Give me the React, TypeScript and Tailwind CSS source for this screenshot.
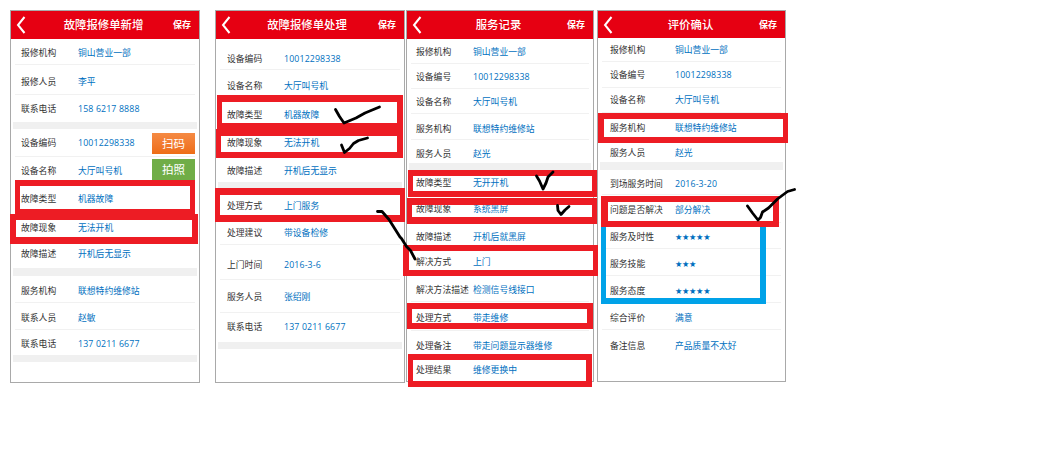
import React from "react";

type Row = { label?: string; value?: string; cls: string; band?: boolean; plain?: boolean; action?: React.ReactNode };

const band = (cls: string): Row => ({ cls, band: true });

const scan = (
  <button className="ml-auto -mt-[4px] h-[21px] w-[43px] shrink-0 bg-linear-to-b from-[#f58a43] to-[#ee6d14] text-[11.5px] leading-[19px] text-white">扫码</button>
);
const photo = (
  <button className="ml-auto -mt-[6px] h-[21px] w-[43px] shrink-0 bg-[#70ad47] text-[11.5px] leading-[19px] text-white">拍照</button>
);

const createRows: Row[] = [
  { label: "报修机构", value: "铜山营业一部", cls: "h-[26px] pt-[8px]" },
  { label: "报修人员", value: "李平", cls: "h-[30px] pt-[11px]" },
  { label: "联系电话", value: "158 6217 8888", cls: "h-[27px] pt-[8px]", plain: true },
  band("h-[7px]"),
  { label: "设备编码", value: "10012298338", cls: "h-[28px] pt-[8px]", action: scan },
  { label: "设备名称", value: "大厅叫号机", cls: "h-[28px] pt-[8px]", action: photo },
  { label: "故障类型", value: "机器故障", cls: "h-[28px] pt-[8px]" },
  { label: "故障现象", value: "无法开机", cls: "h-[28px] pt-[9px]" },
  { label: "故障描述", value: "开机后无显示", cls: "h-[27px] pt-[7px]", plain: true },
  band("h-[8px]"),
  { label: "服务机构", value: "联想特约维修站", cls: "h-[27px] pt-[9px]" },
  { label: "联系人员", value: "赵敏", cls: "h-[27px] pt-[9px]" },
  { label: "联系电话", value: "137 0211 6677", cls: "h-[25px] pt-[8px]", plain: true },
  band("h-[7px]"),
];

const handleRows: Row[] = [
  { label: "设备编码", value: "10012298338", cls: "h-[31px] pt-[13px]" },
  { label: "设备名称", value: "大厅叫号机", cls: "h-[28px] pt-[9px]" },
  { label: "故障类型", value: "机器故障", cls: "h-[30px] pt-[10px]" },
  { label: "故障现象", value: "无法开机", cls: "h-[28px] pt-[8px]" },
  { label: "故障描述", value: "开机后无显示", cls: "h-[26px] pt-[8px]", plain: true },
  band("h-[6px]"),
  { label: "处理方式", value: "上门服务", cls: "h-[31px] pt-[11px]" },
  { label: "处理建议", value: "带设备检修", cls: "h-[26px] pt-[7px]" },
  { label: "上门时间", value: "2016-3-6", cls: "h-[35px] pt-[13px]" },
  { label: "服务人员", value: "张绍刚", cls: "h-[33px] pt-[10px]" },
  { label: "联系电话", value: "137 0211 6677", cls: "h-[29px] pt-[7px]", plain: true },
  band("h-[7px]"),
];

const recordRows: Row[] = [
  { label: "报修机构", value: "铜山营业一部", cls: "h-[25px] pt-[6px]" },
  { label: "设备编号", value: "10012298338", cls: "h-[25px] pt-[6px]" },
  { label: "设备名称", value: "大厅叫号机", cls: "h-[25px] pt-[6px]" },
  { label: "服务机构", value: "联想特约维修站", cls: "h-[26px] pt-[8px]" },
  { label: "服务人员", value: "赵光", cls: "h-[23px] pt-[7px]", plain: true },
  band("h-[7px]"),
  { label: "故障类型", value: "无开开机", cls: "h-[26px] pt-[6px]" },
  { label: "故障现象", value: "系统黑屏", cls: "h-[27px] pt-[6px]" },
  { label: "故障描述", value: "开机后就黑屏", cls: "h-[26px] pt-[7px]" },
  { label: "解决方式", value: "上门", cls: "h-[26px] pt-[6px]" },
  { label: "解决方法描述", value: "检测信号线接口", cls: "h-[27px] pt-[8px]" },
  { label: "处理方式", value: "带走维修", cls: "h-[29px] pt-[9px]" },
  { label: "处理备注", value: "带走问题显示器维修", cls: "h-[26px] pt-[8px]" },
  { label: "处理结果", value: "维修更换中", cls: "h-[24px] pt-[6px]", plain: true },
];

const reviewRows: Row[] = [
  { label: "报修机构", value: "铜山营业一部", cls: "h-[24px] pt-[6px]" },
  { label: "设备编号", value: "10012298338", cls: "h-[26px] pt-[7px]" },
  { label: "设备名称", value: "大厅叫号机", cls: "h-[25px] pt-[6px]" },
  { label: "服务机构", value: "联想特约维修站", cls: "h-[27px] pt-[9px]" },
  { label: "服务人员", value: "赵光", cls: "h-[22px] pt-[7px]", plain: true },
  band("h-[8px]"),
  { label: "到场服务时间", value: "2016-3-20", cls: "h-[25px] pt-[8px]" },
  { label: "问题是否解决", value: "部分解决", cls: "h-[28px] pt-[9px]" },
  { label: "服务及时性", value: "★★★★★", cls: "h-[26px] pt-[8px]" },
  { label: "服务技能", value: "★★★", cls: "h-[27px] pt-[9px]" },
  { label: "服务态度", value: "★★★★★", cls: "h-[27px] pt-[9px]" },
  { label: "综合评价", value: "满意", cls: "h-[27px] pt-[9px]" },
  { label: "备注信息", value: "产品质量不太好", cls: "h-[40px] pt-[10px]", plain: true },
];

type PanelProps = { title: string; rows: Row[]; cls: string; header: string; indent: string; labelW: string };

function valueStyle(value = "") {
  if (value.startsWith("★")) return "font-['DejaVu_Sans'] text-[8.2px] tracking-[-0.3px]";
  if (/^\d/.test(value)) return "tracking-[0.13px]";
  return "";
}

function Panel({ title, rows, cls, header, indent, labelW }: PanelProps) {
  return (
    <section className={`shrink-0 border border-[#a9a9a9] bg-white ${cls}`}>
      <header className={`grid items-center bg-[#e60012] text-white ${header}`}>
        <svg viewBox="0 0 10 18" className="ml-[5px] h-[18px] w-[10px]" fill="none" stroke="currentColor" strokeWidth="2">
          <path d="M8.5 1 2 9l6.5 8" />
        </svg>
        <h1 className="text-center text-[11.4px] leading-4 font-medium whitespace-nowrap">{title}</h1>
        <span className="pr-2 text-right text-[9px] leading-4 font-bold">保存</span>
      </header>
      {rows.map((r, i) =>
        r.band ? (
          <div key={i} className={`mx-0.5 bg-[#f0f0f0] ${r.cls}`} />
        ) : (
          <div key={i} className={`mx-1 flex items-start border-b ${r.plain ? "border-transparent" : "border-[#f1f1f1]"} ${r.cls}`}>
            <span className={`shrink-0 whitespace-nowrap text-[#333] ${indent} ${labelW}`}>{r.label}</span>
            <span className={`whitespace-nowrap text-[#0070c0] ${valueStyle(r.value)}`}>{r.value}</span>
            {r.action}
          </div>
        )
      )}
    </section>
  );
}

const marks = [
  "left-[15px] top-[180px] h-[34px] w-[180px] border-x-[5px] border-t-[6px] border-b-[5px] border-[#ed1c24]",
  "left-[10px] top-[214px] h-[30px] w-[188px] border-x-[6px] border-t-[6px] border-b-[7px] border-[#ed1c24]",
  "left-[217px] top-[95px] h-[35px] w-[186px] border-l-[5px] border-r-[6px] border-t-[7px] border-b-[7px] border-[#ed1c24]",
  "left-[216px] top-[129px] h-[29px] w-[187px] border-l-[5px] border-r-[6px] border-t-[7px] border-b-[6px] border-[#ed1c24]",
  "left-[215px] top-[188px] h-[34px] w-[190px] border-x-[5px] border-t-[7px] border-b-[7px] border-[#ed1c24]",
  "left-[408px] top-[170px] h-[27px] w-[189px] border-x-[5px] border-y-[6px] border-[#ed1c24]",
  "left-[407px] top-[198px] h-[26px] w-[190px] border-x-[5px] border-y-[7px] border-[#ed1c24]",
  "left-[403px] top-[245px] h-[31px] w-[195px] border-l-[6px] border-r-[5px] border-y-[6px] border-[#ed1c24]",
  "left-[407px] top-[303px] h-[26px] w-[186px] border-l-[5px] border-r-[6px] border-y-[6px] border-[#ed1c24]",
  "left-[408px] top-[354px] h-[33px] w-[184px] border-l-[5px] border-r-[6px] border-y-[6px] border-[#ed1c24]",
  "left-[601px] top-[221px] h-[83px] w-[165px] border-l-[5px] border-r-[6px] border-y-[6px] border-[#00a2e8]",
  "left-[598px] top-[113px] h-[30px] w-[190px] border-l-[6px] border-r-[5px] border-y-[6px] border-[#ed1c24]",
  "left-[601px] top-[196px] h-[31px] w-[178px] border-l-[7px] border-r-[6px] border-y-[6px] border-[#ed1c24]",
];

export default function App() {
  return (
    <main className="relative flex h-[466px] w-[1052px] items-start overflow-hidden bg-white pt-[10px] pl-[10px] font-['Open_Sans','Noto_Sans_CJK_SC',sans-serif] text-[8.8px] leading-[12px]">
      <Panel title="故障报修单新增" rows={createRows} cls="h-[373px] w-[190px]" header="h-[28px] grid-cols-[38px_1fr_41px]" indent="pl-[6px]" labelW="w-[63px]" />
      <Panel title="故障报修单处理" rows={handleRows} cls="ml-[15px] h-[373px] w-[190px] leading-[14px]" header="h-[28px] grid-cols-[36px_1fr_42px]" indent="pl-[7px]" labelW="w-[64px]" />
      <Panel title="服务记录" rows={recordRows} cls="ml-[1px] h-[372px] w-[188px] leading-[14px]" header="h-[28px] grid-cols-[38px_1fr_41px]" indent="pl-[5px]" labelW="w-[62px]" />
      <Panel title="评价确认" rows={reviewRows} cls="ml-[3px] h-[372px] w-[189px]" header="h-[27px] grid-cols-[39px_1fr_41px]" indent="pl-[8px]" labelW="w-[73px]" />
      {marks.map((m) => (
        <div key={m} className={`pointer-events-none absolute ${m}`} />
      ))}
      <svg className="pointer-events-none absolute inset-0" width="1052" height="466" fill="none" stroke="#000" strokeWidth="2.8" strokeLinecap="round" strokeLinejoin="round">
        <path d="M335.5 109.5l4 7 4.500 6.500 12-5 9-5 6-2.500 8.500-3.500" />
        <path d="M341.500 145l3 7.500 5-4 4-5 5-3 9-2.500" />
        <path d="M377.500 211.500h4.500l7 8 11 17.500 1.500 1.500 5 8 4 4 4.500 8.500" />
        <path d="M536.500 176l3 5 3.500 8 3-6 2-6 5-5" />
        <path d="M557.500 205.500l.5 5 3 4 4-4.500 4-3.500" />
        <path d="M747.500 206l5 7 5.500 7 2.500-2.500 2-5.500 6-4 9-9 10-7.500 7-2" />
      </svg>
    </main>
  );
}
